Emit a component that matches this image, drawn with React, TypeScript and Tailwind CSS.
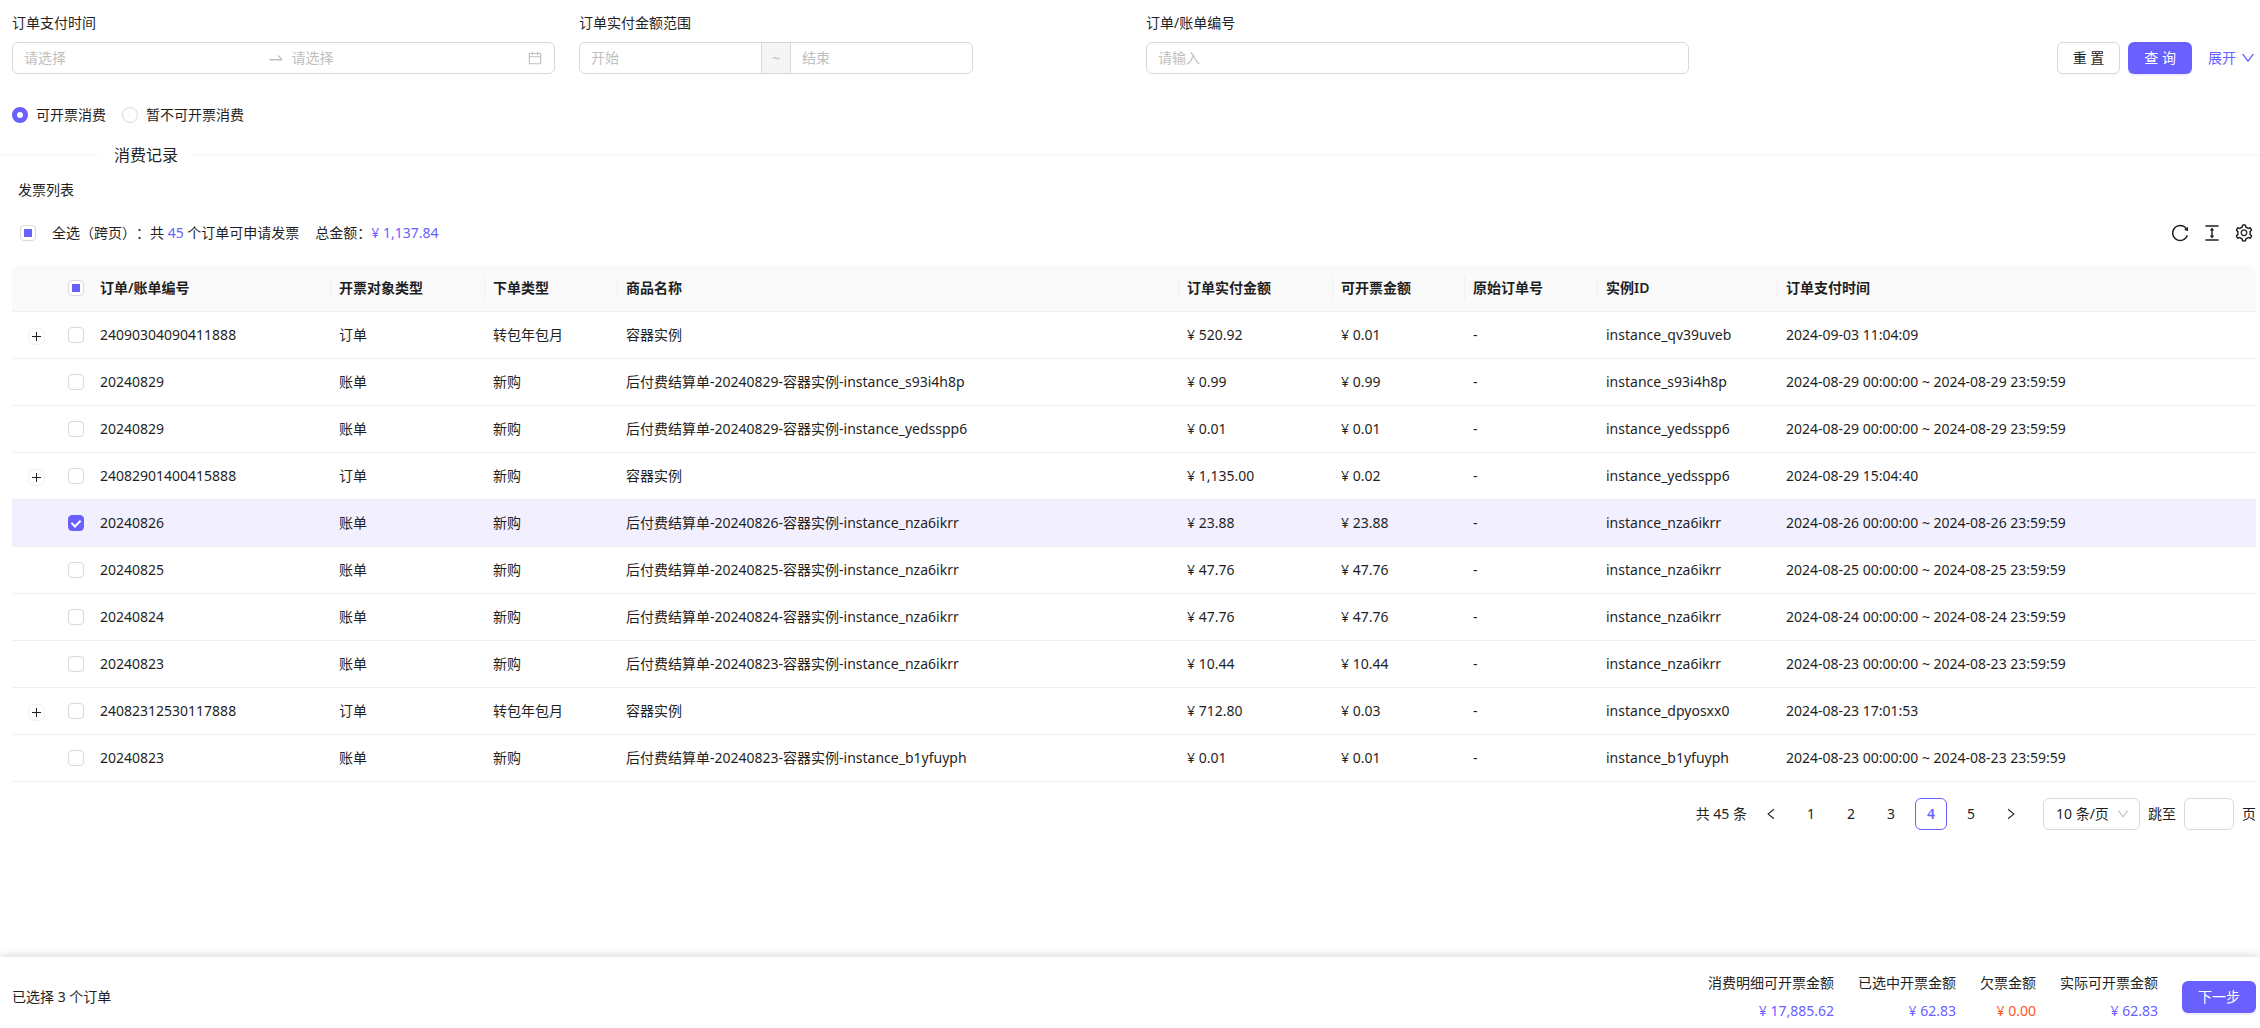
import React, { useState } from "react";
import clsx from "clsx";
import {
  AiOutlineCalendar,
  AiOutlineColumnHeight,
  AiOutlineDown,
  AiOutlineLeft,
  AiOutlineReload,
  AiOutlineRight,
  AiOutlineSetting,
  AiOutlineSwapRight,
} from "react-icons/ai";

interface OrderRow {
  id: string;
  target: string;
  orderType: string;
  product: string;
  paid: string;
  invoiceable: string;
  instance: string;
  payTime: string;
  expandable?: boolean;
}

const billRow = (
  day: string,
  instance: string,
  paid: string,
  invoiceable = paid
): OrderRow => {
  const date = `2024-08-${day}`;
  return {
    id: `202408${day}`,
    target: "账单",
    orderType: "新购",
    product: `后付费结算单-202408${day}-容器实例-${instance}`,
    paid,
    invoiceable,
    instance,
    payTime: `${date} 00:00:00 ~ ${date} 23:59:59`,
  };
};

const rows: OrderRow[] = [
  {
    id: "24090304090411888",
    target: "订单",
    orderType: "转包年包月",
    product: "容器实例",
    paid: "520.92",
    invoiceable: "0.01",
    instance: "instance_qv39uveb",
    payTime: "2024-09-03 11:04:09",
    expandable: true,
  },
  billRow("29", "instance_s93i4h8p", "0.99"),
  billRow("29", "instance_yedsspp6", "0.01"),
  {
    id: "24082901400415888",
    target: "订单",
    orderType: "新购",
    product: "容器实例",
    paid: "1,135.00",
    invoiceable: "0.02",
    instance: "instance_yedsspp6",
    payTime: "2024-08-29 15:04:40",
    expandable: true,
  },
  billRow("26", "instance_nza6ikrr", "23.88"),
  billRow("25", "instance_nza6ikrr", "47.76"),
  billRow("24", "instance_nza6ikrr", "47.76"),
  billRow("23", "instance_nza6ikrr", "10.44"),
  {
    id: "24082312530117888",
    target: "订单",
    orderType: "转包年包月",
    product: "容器实例",
    paid: "712.80",
    invoiceable: "0.03",
    instance: "instance_dpyosxx0",
    payTime: "2024-08-23 17:01:53",
    expandable: true,
  },
  billRow("23", "instance_b1yfuyph", "0.01"),
];

const columns = [
  { title: "订单/账单编号", width: "w-[239px]" },
  { title: "开票对象类型", width: "w-[154px]" },
  { title: "下单类型", width: "w-[133px]" },
  { title: "商品名称", width: "" },
  { title: "订单实付金额", width: "w-[154px]" },
  { title: "可开票金额", width: "w-[132px]" },
  { title: "原始订单号", width: "w-[133px]" },
  { title: "实例ID", width: "w-[180px]" },
  { title: "订单支付时间", width: "w-[478px]" },
];

const summary = [
  { label: "消费明细可开票金额", value: "17,885.62", color: "text-[#6960ff]" },
  { label: "已选中开票金额", value: "62.83", color: "text-[#6960ff]" },
  { label: "欠票金额", value: "0.00", color: "text-[#ff5722]" },
  { label: "实际可开票金额", value: "62.83", color: "text-[#6960ff]" },
];

interface CheckboxProps {
  id?: string;
  label?: string;
  checked?: boolean;
  indeterminate?: boolean;
  onChange?: () => void;
}

const Checkbox: React.FC<CheckboxProps> = ({
  id,
  label,
  checked = false,
  indeterminate = false,
  onChange = () => {},
}) => (
  <input
    id={id}
    type="checkbox"
    aria-label={label}
    checked={checked}
    onChange={onChange}
    className={clsx(
      "grid size-4 shrink-0 appearance-none place-content-center rounded border",
      checked ? "border-[#6960ff] bg-[#6960ff]" : "border-[#d9d9d9] bg-white",
      checked &&
        "before:h-[9px] before:w-[6px] before:-translate-y-px before:rotate-45 before:border-r-2 before:border-b-2 before:border-white before:content-['']",
      indeterminate && "before:size-2 before:bg-[#6960ff] before:content-['']"
    )}
  />
);

const inputClasses =
  "min-w-0 flex-1 bg-transparent outline-none placeholder:text-[#bfbfbf]";

const SearchForm = () => (
  <form
    className="grid grid-cols-4 gap-6 pt-3 pr-1 pl-3"
    onSubmit={(e) => e.preventDefault()}
  >
    <div className="flex flex-col gap-2">
      <label htmlFor="pay-start">订单支付时间</label>
      <div className="flex h-8 items-center rounded-md border border-[#d9d9d9] px-[11px]">
        <input id="pay-start" placeholder="请选择" className={inputClasses} />
        <AiOutlineSwapRight size={18} className="mx-[7px] text-[#bfbfbf]" />
        <input
          aria-label="结束时间"
          placeholder="请选择"
          className={inputClasses}
        />
        <AiOutlineCalendar size={16} className="text-[#bfbfbf]" />
      </div>
    </div>

    <div className="flex flex-col gap-2">
      <label htmlFor="amount-min">订单实付金额范围</label>
      <div className="flex h-8 w-full max-w-[394px] overflow-hidden rounded-md border border-[#d9d9d9]">
        <input
          id="amount-min"
          placeholder="开始"
          className={clsx(inputClasses, "px-[11px]")}
        />
        <span className="flex w-[30px] items-center justify-center border-x border-[#d9d9d9] bg-[#f5f5f5] text-[#bfbfbf]">
          ~
        </span>
        <input
          aria-label="结束金额"
          placeholder="结束"
          className={clsx(inputClasses, "px-[11px]")}
        />
      </div>
    </div>

    <div className="flex flex-col gap-2">
      <label htmlFor="order-no">订单/账单编号</label>
      <div className="flex h-8 rounded-md border border-[#d9d9d9] px-[11px]">
        <input id="order-no" placeholder="请输入" className={inputClasses} />
      </div>
    </div>

    <div className="flex items-end justify-end gap-2">
      <button
        type="reset"
        className="h-8 rounded-md border border-[#d9d9d9] bg-white px-[15px] shadow-[0_2px_0_rgba(0,0,0,0.02)]"
      >
        重 置
      </button>
      <button
        type="submit"
        className="h-8 rounded-md bg-[#6960ff] px-4 text-white shadow-[0_2px_0_rgba(105,96,255,0.1)]"
      >
        查 询
      </button>
      <a
        href="#expand"
        className="ml-2 flex h-8 items-center gap-1 text-[#6960ff]"
      >
        展开
        <AiOutlineDown size={16} />
      </a>
    </div>
  </form>
);

interface RadioProps {
  label: string;
  checked: boolean;
  onChange: () => void;
}

const Radio: React.FC<RadioProps> = ({ label, checked, onChange }) => (
  <label className="flex items-center gap-2">
    <input
      type="radio"
      name="invoice-scope"
      checked={checked}
      onChange={onChange}
      className={clsx(
        "size-4 appearance-none rounded-full bg-white",
        checked
          ? "border-5 border-[#6960ff]"
          : "border border-[#d9d9d9]"
      )}
    />
    {label}
  </label>
);

const OrderTable = () => {
  const [selected, setSelected] = useState<number[]>([4]);

  const toggle = (index: number) =>
    setSelected((prev) =>
      prev.includes(index) ? prev.filter((i) => i !== index) : [...prev, index]
    );

  return (
    <table className="w-full table-fixed border-separate border-spacing-0 text-left">
      <thead>
        <tr className="h-[47px]">
          <th className="w-12 rounded-tl-lg border-b border-[#f0f0f0] bg-[#fafafa]" />
          <th className="w-8 border-b border-[#f0f0f0] bg-[#fafafa] px-2">
            <Checkbox label="选择本页" indeterminate />
          </th>
          {columns.map((col, i) => (
            <th
              key={col.title}
              className={clsx(
                "border-b border-[#f0f0f0] bg-[#fafafa] p-0 font-semibold",
                col.width,
                i === columns.length - 1 && "rounded-tr-lg"
              )}
            >
              <div
                className={clsx(
                  "px-2",
                  i < columns.length - 1 && "border-r border-[#f0f0f0]"
                )}
              >
                {col.title}
              </div>
            </th>
          ))}
        </tr>
      </thead>
      <tbody>
        {rows.map((row, i) => {
          const isSelected = selected.includes(i);
          const cells = [
            row.id,
            row.target,
            row.orderType,
            row.product,
            `¥ ${row.paid}`,
            `¥ ${row.invoiceable}`,
            "-",
            row.instance,
            row.payTime,
          ];
          return (
            <tr key={i} className={clsx("h-[47px]", isSelected && "bg-[#f2f0ff]")}>
              <td className="border-b border-[#f0f0f0] p-0">
                {row.expandable && (
                  <button
                    aria-label="展开行"
                    className="mx-auto mt-[3px] flex size-[17px] items-center justify-center rounded-md border border-[#f0f0f0] bg-white"
                  >
                    <svg width="9" height="9" viewBox="0 0 9 9">
                      <path d="M0 4.5h9M4.5 0v9" stroke="#1f1f1f" />
                    </svg>
                  </button>
                )}
              </td>
              <td className="border-b border-[#f0f0f0] px-2 py-0">
                <Checkbox
                  label={`选择 ${row.id}`}
                  checked={isSelected}
                  onChange={() => toggle(i)}
                />
              </td>
              {cells.map((cell, j) => (
                <td key={j} className="border-b border-[#f0f0f0] px-2 py-0">
                  {cell}
                </td>
              ))}
            </tr>
          );
        })}
      </tbody>
    </table>
  );
};

const Pagination = () => {
  const [page, setPage] = useState(4);

  return (
    <nav className="mt-4 flex items-center justify-end gap-2">
      <span>共 45 条</span>
      <button
        aria-label="上一页"
        className="flex size-8 items-center justify-center"
        onClick={() => setPage(Math.max(1, page - 1))}
      >
        <AiOutlineLeft size={14} />
      </button>
      {[1, 2, 3, 4, 5].map((n) => (
        <button
          key={n}
          onClick={() => setPage(n)}
          className={clsx(
            "size-8 rounded-md",
            n === page && "border border-[#6960ff] font-semibold text-[#6960ff]"
          )}
        >
          {n}
        </button>
      ))}
      <button
        aria-label="下一页"
        className="flex size-8 items-center justify-center"
        onClick={() => setPage(Math.min(5, page + 1))}
      >
        <AiOutlineRight size={14} />
      </button>
      <div className="relative ml-2">
        <select
          aria-label="每页条数"
          className="h-8 w-[97px] appearance-none rounded-md border border-[#d9d9d9] bg-white pl-3"
        >
          <option>10 条/页</option>
          <option>20 条/页</option>
          <option>50 条/页</option>
        </select>
        <AiOutlineDown
          size={14}
          className="pointer-events-none absolute top-[9px] right-[10px] text-[#bfbfbf]"
        />
      </div>
      <label htmlFor="jump-page">跳至</label>
      <input
        id="jump-page"
        className="h-8 w-[50px] rounded-md border border-[#d9d9d9] px-3"
      />
      <span>页</span>
    </nav>
  );
};

export default function App() {
  const [scope, setScope] = useState("available");

  return (
    <div className="flex min-h-screen flex-col bg-white font-['Noto_Sans','Noto_Sans_CJK_SC',sans-serif] text-[14px] leading-[22px] text-[#1f1f1f]">
      <SearchForm />

      <div className="mt-[29px] flex gap-4 px-3 leading-6">
        <Radio
          label="可开票消费"
          checked={scope === "available"}
          onChange={() => setScope("available")}
        />
        <Radio
          label="暂不可开票消费"
          checked={scope === "unavailable"}
          onChange={() => setScope("unavailable")}
        />
      </div>

      <div className="mt-4 flex items-center gap-4">
        <div className="h-[2px] w-[98px] bg-[#f8f8f8]" />
        <h2 className="text-[16px] leading-6">消费记录</h2>
        <div className="h-[2px] flex-1 bg-[#f8f8f8]" />
      </div>

      <main className="pr-1 pl-3">
        <h3 className="mt-3 pl-[6px]">发票列表</h3>

        <div className="my-4 flex h-8 items-center pr-[2px] pl-2">
          <Checkbox id="select-all" indeterminate />
          <label
            htmlFor="select-all"
            className="ml-4 [text-spacing-trim:space-all]"
          >
            全选（跨页）：共 <span className="text-[#6960ff]">45</span>{" "}
            个订单可申请发票
          </label>
          <span className="ml-4">
            总金额：<span className="text-[#6960ff]">¥ 1,137.84</span>
          </span>
          <div className="ml-auto flex gap-3">
            <button aria-label="刷新">
              <AiOutlineReload size={20} />
            </button>
            <button aria-label="密度">
              <AiOutlineColumnHeight size={20} />
            </button>
            <button aria-label="列设置">
              <AiOutlineSetting size={20} />
            </button>
          </div>
        </div>

        <OrderTable />
        <Pagination />
      </main>

      <footer className="sticky bottom-0 mt-auto flex items-center gap-6 bg-white pt-3 pr-1 pb-[3px] pl-3 leading-7 shadow-[0_0_10px_rgba(0,0,0,0.2)]">
        <span>已选择 3 个订单</span>
        <dl className="ml-auto flex gap-6 text-right">
          {summary.map((item) => (
            <div key={item.label}>
              <dt>{item.label}</dt>
              <dd className={item.color}>¥ {item.value}</dd>
            </div>
          ))}
        </dl>
        <button className="h-8 rounded-md bg-[#6960ff] px-4 leading-[22px] text-white shadow-[0_2px_0_rgba(105,96,255,0.1)]">
          下一步
        </button>
      </footer>
    </div>
  );
}
